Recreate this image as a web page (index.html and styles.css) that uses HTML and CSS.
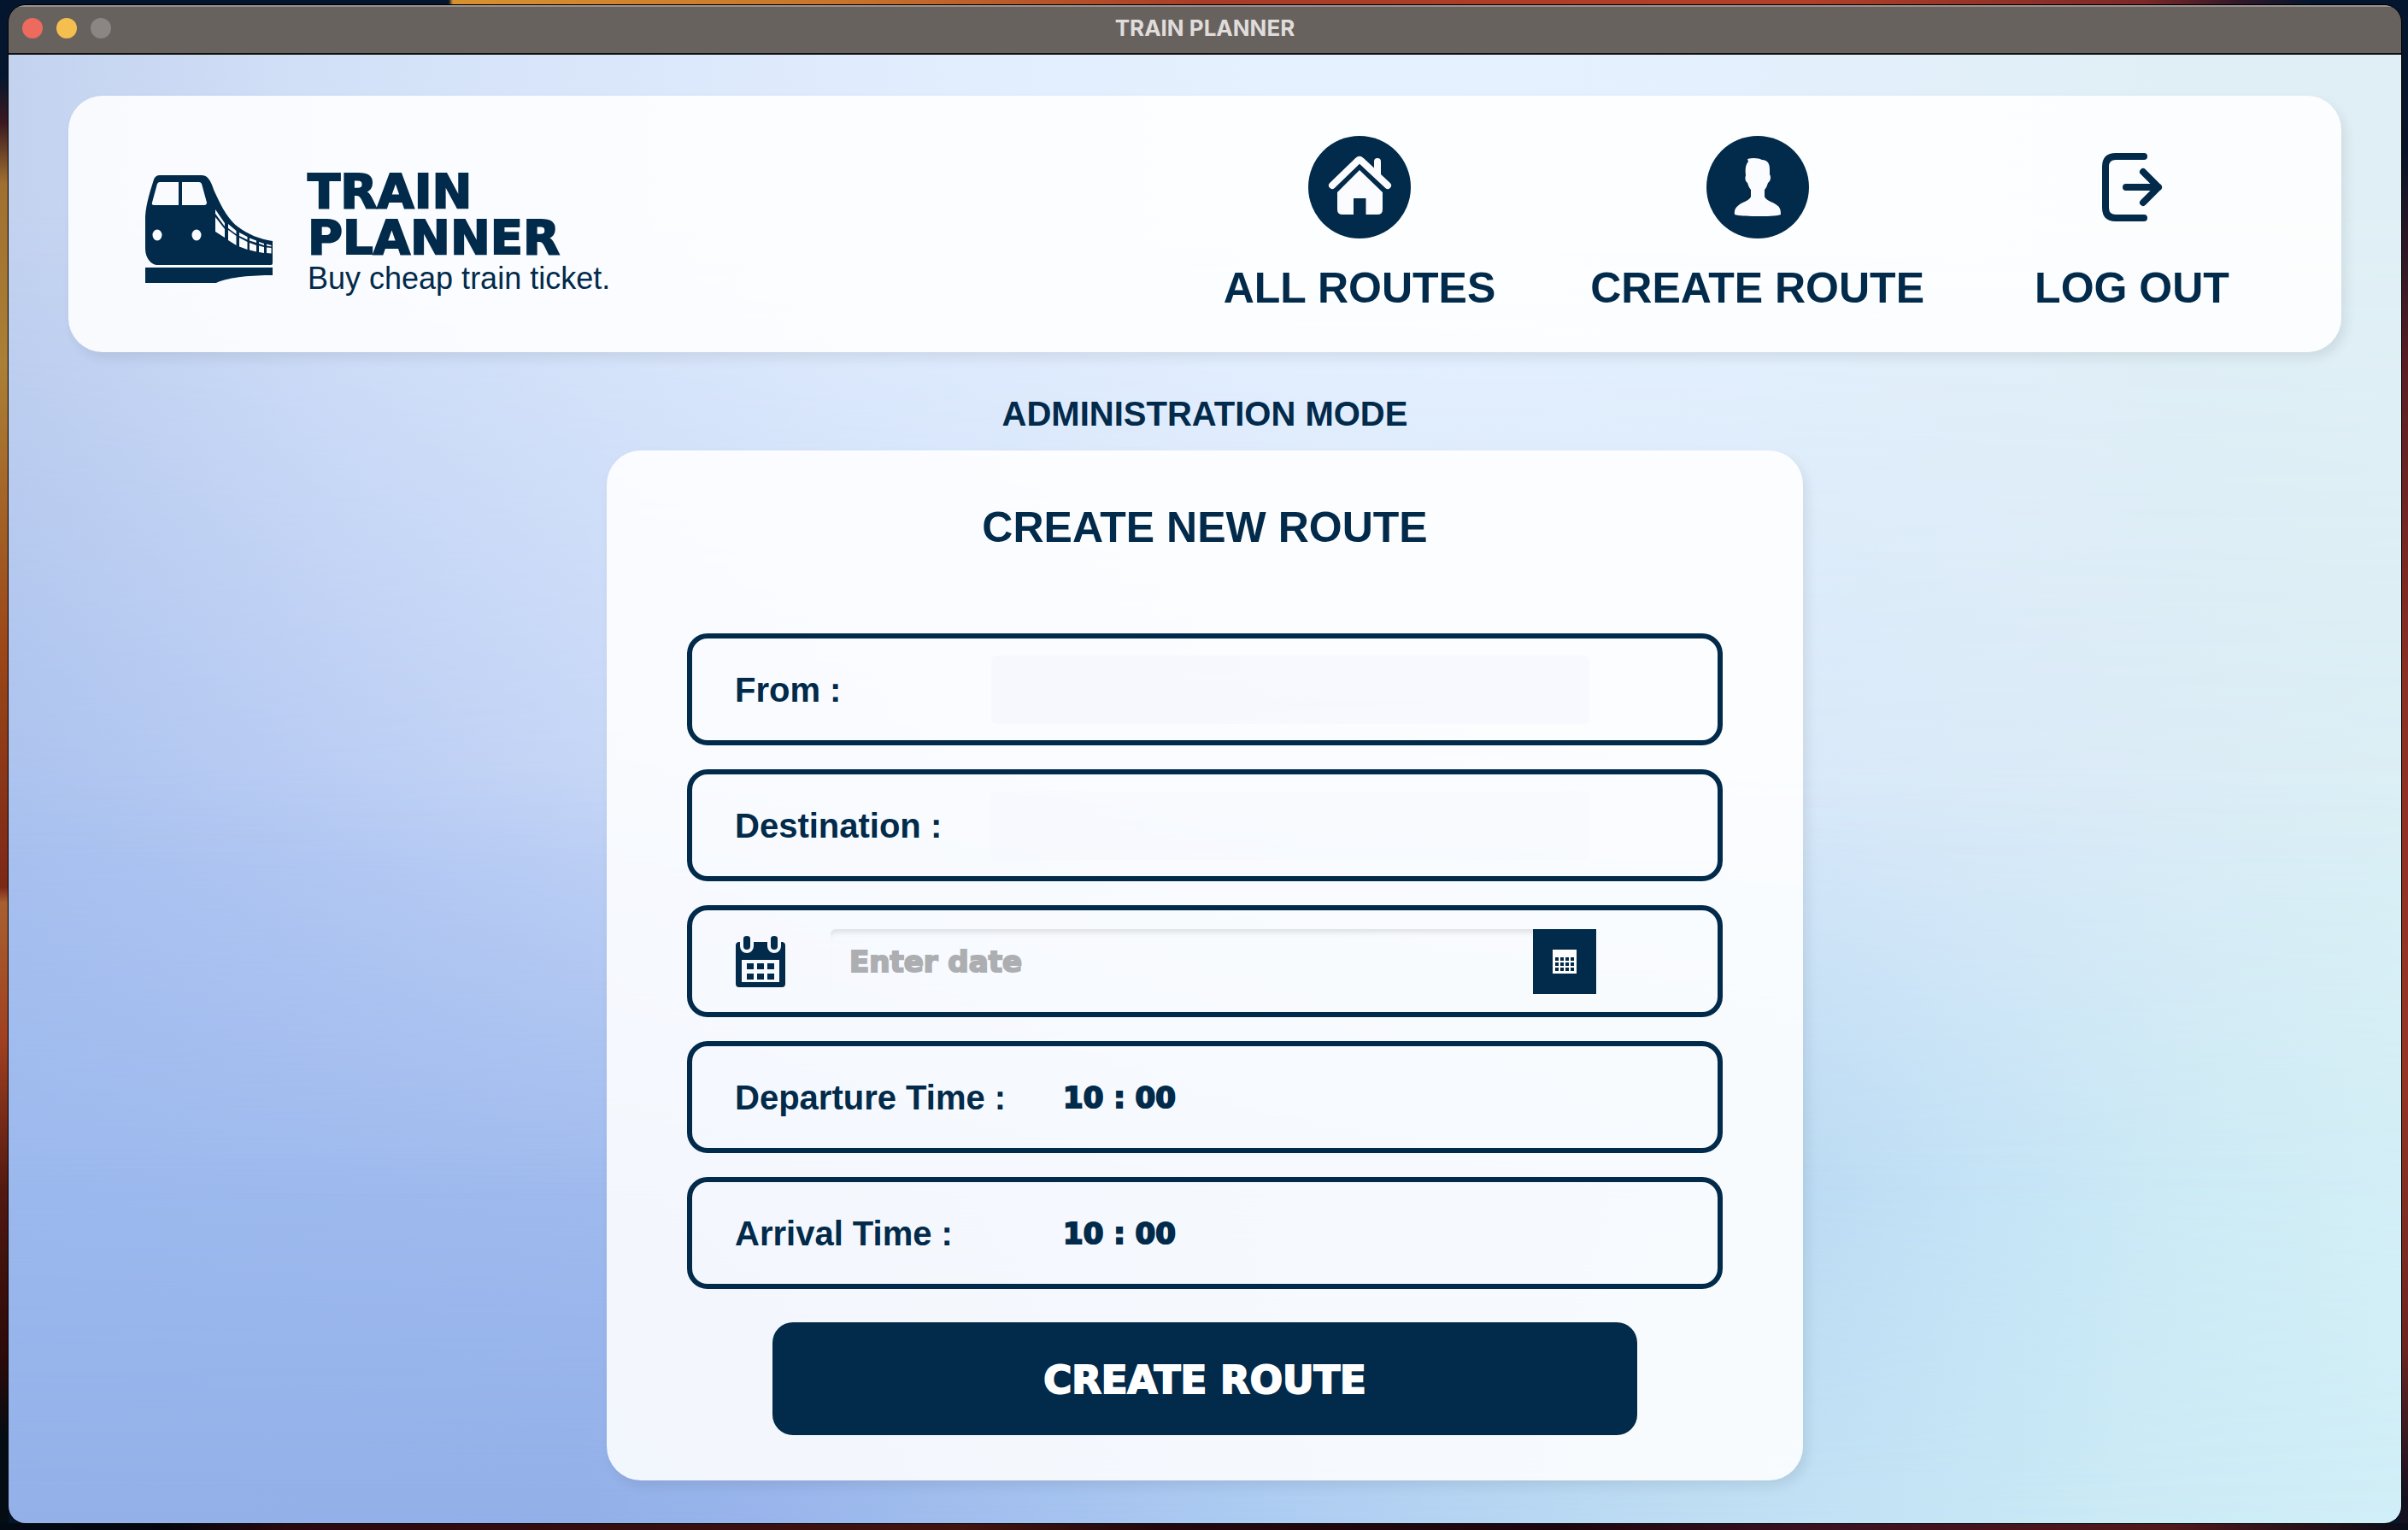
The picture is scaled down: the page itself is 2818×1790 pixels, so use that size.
FILE: index.html
```html
<!DOCTYPE html>
<html lang="en">
<head>
<meta charset="utf-8">
<title>Train Planner</title>
<meta name="viewport" content="width=device-width, initial-scale=1">
<link rel="stylesheet" href="styles.css">
</head>
<body>
<div class="window">
  <div class="titlebar">
    <div class="lights">
      <button type="button" class="light light-close" aria-label="Close"></button>
      <button type="button" class="light light-minimize" aria-label="Minimize"></button>
      <button type="button" class="light light-zoom" aria-label="Zoom" disabled></button>
    </div>
    <div class="window-title">TRAIN PLANNER</div>
  </div>

  <div class="content">
    <header class="header panel">
      <div class="brand">
        <svg class="brand-icon" viewBox="0 0 149 126" aria-hidden="true">
          <path fill="currentColor" fill-rule="evenodd" d="M17 0H66C75 0 78 11 81 19C88 34 96 51 108 60C120 69 134 75 149 77V103Q149 105 147 105H14C8 105 0 98 0 86V48C1 33 6 18 10 5Q12 0 17 0ZM17 8Q15 8 14 10L8 32Q7 35 10 35H39V8ZM43 8V35H69Q72 35 72 32L66 10Q65 8 63 8Z"/>
          <path fill="currentColor" d="M0 108H149V117C125 117 98 119 83 126H0Z"/>
          <g class="cutout">
            <ellipse cx="14" cy="70" rx="5.500" ry="6.500"/>
            <ellipse cx="60" cy="70" rx="5.500" ry="6.500"/>
            <path d="M82 40L93 56V60L82 45ZM82 49L93 63V73L82 66ZM97 57L106.500 65V69L97 62ZM97 64L106.500 71V82L97 76ZM110 67L119.500 72V75.500L110 71ZM110 73L119.500 78V87L110 83.500ZM122 73.500L130 76.500V79L122 76.500ZM122 79L130 82V89.500L122 87.500ZM133 78L139 80V82L133 80ZM133 82.500L139 84V91L133 90ZM142 80.500L147.500 82V83.500L142 82.500ZM142 84.500L147.500 85V91.500L142 91Z"/>
          </g>
        </svg>
        <div>
          <h1 class="brand-name heavy">TRAIN<br>PLANNER</h1>
          <p class="brand-tagline">Buy cheap train ticket.</p>
        </div>
      </div>

      <nav class="nav">
        <a class="nav-item" href="#routes">
          <svg class="nav-icon" viewBox="0 0 120 120" aria-hidden="true">
            <circle cx="60" cy="60" r="60" fill="currentColor"/>
            <path class="cutout-line" d="M28 58L58 29Q60 27 62 29L93 58"/>
            <path class="cutout" d="M77 30Q77 26 81 26T85 30V48L77 40ZM60 40L87 66V86Q87 92 81 92H67.500V73H53V92H40Q34 92 34 86V66Z"/>
          </svg>
          <span>ALL ROUTES</span>
        </a>
        <a class="nav-item" href="#create" aria-current="page">
          <svg class="nav-icon" viewBox="0 0 120 120" aria-hidden="true">
            <circle cx="60" cy="60" r="60" fill="currentColor"/>
            <path class="cutout" d="M48 27C54 25 62 26 65 28C72 28 74 33 74 39V45C76 48 75 53 72 55C71 58 70 61 68 63V71C70 76 77 77 81 80C86 83 87 86 87 92C81 94 70 94 60 94C50 94 39 94 33 92C32 86 35 83 39 80C43 77 50 76 52 71V63C50 61 49 58 48 55C45 53 45 49 46 46C45 39 46 33 49 30Z"/>
          </svg>
          <span>CREATE ROUTE</span>
        </a>
        <a class="nav-item" href="#logout">
          <svg class="nav-icon" viewBox="0 0 120 120" aria-hidden="true">
            <path class="line" d="M74 24H41Q29 24 29 36V84Q29 96 41 96H74M53 60H91M73 42L91 60L73 78"/>
          </svg>
          <span>LOG OUT</span>
        </a>
      </nav>
    </header>

    <p class="mode">ADMINISTRATION MODE</p>

    <main class="card panel">
      <h2 class="card-title">CREATE NEW ROUTE</h2>
      <form class="form">
        <div class="field">
          <label class="field-label" for="from">From :</label>
          <input class="place heavy" id="from" type="text">
        </div>
        <div class="field">
          <label class="field-label" for="destination">Destination :</label>
          <input class="place place-plain heavy" id="destination" type="text">
        </div>
        <div class="field">
          <label class="date-label" for="date" aria-label="Date">
            <svg class="date-icon" viewBox="0 0 58 60" aria-hidden="true">
              <path fill="currentColor" fill-rule="evenodd" d="M3 7H5V12A8 8 0 0 0 21 12V7H37V12A8 8 0 0 0 53 12V7H55Q58 8 58 11V56Q58 60 54 60H4Q0 60 0 56V11Q0 8 3 7ZM7 28V54H51V28Z"/>
              <path fill="currentColor" d="M9 3Q9 0 13 0T17 3V12Q17 16 13 16T9 12ZM41 3Q41 0 45 0T49 3V12Q49 16 45 16T41 12ZM13 32h8v7h-8zM25 32h8v7h-8zM37 32h8v7h-8zM13 44h8v7h-8zM25 44h8v7h-8zM37 44h8v7h-8z"/>
            </svg>
          </label>
          <div class="date-picker">
            <input class="date-input heavy" id="date" type="text" placeholder="Enter date">
            <button class="date-button" type="button" aria-label="Open calendar">
              <svg class="date-grid" viewBox="0 0 28 28" aria-hidden="true">
                <path fill="currentColor" fill-rule="evenodd" d="M0 0H28V28H0ZM3 9v4h4v-4zM9 9v4h4v-4zM15 9v4h4v-4zM21 9v4h4v-4zM3 15v4h4v-4zM9 15v4h4v-4zM15 15v4h4v-4zM21 15v4h4v-4zM3 21v4h4v-4zM9 21v4h4v-4zM15 21v4h4v-4zM21 21v4h4v-4z"/>
              </svg>
            </button>
          </div>
        </div>
        <div class="field">
          <label class="field-label field-label-time" for="departure">Departure Time :</label>
          <input class="time heavy" id="departure" type="text" value="10 : 00">
        </div>
        <div class="field">
          <label class="field-label field-label-time" for="arrival">Arrival Time :</label>
          <input class="time heavy" id="arrival" type="text" value="10 : 00">
        </div>
        <button class="submit heavy" type="submit">CREATE ROUTE</button>
      </form>
    </main>
  </div>
</div>
</body>
</html>
```

FILE: styles.css
```css
:root {
  --navy: #022a4a;
  --sans: "Liberation Sans", Arial, sans-serif;
}

* {
  box-sizing: border-box;
}

body {
  margin: 0;
  min-height: 100vh;
  padding: 6px 8px 8px 10px;
  display: flex;
  color: var(--navy);
  font-family: var(--sans);
  background:
    linear-gradient(90deg, #04162e 0 525px, #d8912f 530px, #c8742c 35%, #a83c28 50%, #b04028 75%, #7c2828 89%, #301828 93%, #04162e 96%) top / 100% 6px no-repeat,
    linear-gradient(90deg, #020a14 0, #04060c 7%, #2a0810 12%, #401410 40%, #22080e 48%, #1c060e 65%, #3a1020 75%, #50181c 90%, #0a0c18 100%) bottom / 100% 8px no-repeat,
    linear-gradient(#04162e 0, #04162e 5%, #3a1820 8%, #a07030 12%, #ab7f35 24%, #9c4818 42%, #7c2818 58%, #a86030 59%, #a04020 68%, #501810 78%, #2a0a08 89%, #040c14 94%) left / 10px 100% no-repeat,
    linear-gradient(#04162e 0, #081226 10%, #5a1c24 24%, #8c3024 45%, #943624 70%, #6c2420 88%, #141020 98%) right / 10px 100% no-repeat,
    #04162e;
}

/* Widest, darkest cut, for the brand, field values and the main button. */
.heavy {
  font-family: "Arial Black", "DejaVu Sans", sans-serif;
  font-weight: 900;
  -webkit-text-stroke: 2px currentColor;
}

.window {
  flex: 1;
  display: flex;
  flex-direction: column;
  border-radius: 20px;
  overflow: hidden;
  box-shadow: 0 0 0 1px #000;
}

.titlebar {
  display: grid;
  grid-template-columns: 1fr auto 1fr;
  align-items: center;
  height: 58px;
  padding: 0 16px 2px;
  background: #68625f;
  border-bottom: 2px solid #100f0f;
  box-shadow: inset 0 2px #999190;
}

.lights {
  display: flex;
  gap: 16px;
}

.light {
  width: 24px;
  height: 24px;
  padding: 0;
  border: 0;
  border-radius: 50%;
}

.light-close { background: #ed6a5e; }
.light-minimize { background: #f5bf4f; }
.light-zoom { background: #8b8583; }

.window-title {
  color: #dfdcda;
  font: 700 26px/30px Inter, sans-serif;
}

/* Backdrop: four horizontal colour rows, each fading into the one below. */
.content {
  position: relative;
  isolation: isolate;
  flex: 1;
  display: flex;
  flex-direction: column;
  align-items: center;
  padding: 48px 70px 50px;
  background: linear-gradient(90deg, #94b1e9 0, #93b0e9 24%, #99b5ec 32%, #aecdf2 53%, #bcdcf3 68%, #c3e2f5 76%, #ccebf6 89%, #d1eff8 100%);
}

.content::before,
.content::after {
  content: "";
  position: absolute;
  inset: 0;
  z-index: -2;
}

.content::before {
  background: linear-gradient(90deg, #9cb9ee 0, #a0bbee 25%, #b2cdf2 55%, #badaf3 75%, #c3e2f6 82%, #cdebf5 92%, #d3eef6 100%);
  mask-image: linear-gradient(#000 74%, transparent 100%);
}

.content::after {
  background: linear-gradient(90deg, #a9c1ef 0, #b5c9f3 12%, #c3d4f6 25%, #d4e4fa 50%, #d8e8f9 75%, #dbebf7 88%, #dbeff5 100%);
  mask-image: linear-gradient(#000 48%, transparent 78%);
}

.header {
  position: relative;
  align-self: stretch;
  display: flex;
  justify-content: space-between;
  align-items: center;
  padding: 47px 113px 47px 90px;
}

.header::before {
  content: "";
  position: absolute;
  inset: -48px -70px auto;
  height: 960px;
  z-index: -1;
  background: linear-gradient(90deg, #c3d2ef 0, #d3e1f8 14%, #e0ecfd 35%, #e6f1ff 54%, #e4f0fd 72%, #e0eff6 90%, #e0eff5 100%);
  mask-image: linear-gradient(#000 18%, transparent);
}

.panel {
  border-radius: 40px;
  background: rgba(255, 255, 255, 0.88);
  box-shadow: 5px 7px 14px rgba(0, 0, 0, 0.08);
}

.brand {
  display: flex;
  align-self: flex-start;
  gap: 41px;
  padding-top: 38px;
}

.brand-icon {
  width: 149px;
  height: 134px;
  padding-top: 8px;
}

.brand-name {
  margin: 0;
  font-size: 56px;
  line-height: 54px;
}

.brand-tagline {
  margin: 0;
  font-size: 36px;
  line-height: 42px;
}

.cutout {
  fill: #fbfcff;
}

.cutout-line {
  fill: none;
  stroke: #fbfcff;
  stroke-width: 8;
  stroke-linecap: round;
}

.line {
  fill: none;
  stroke: currentColor;
  stroke-width: 8;
  stroke-linecap: round;
  stroke-linejoin: round;
}

.nav {
  display: flex;
  gap: 111px;
}

.nav-item {
  display: flex;
  flex-direction: column;
  align-items: center;
  gap: 30px;
  min-width: 264px;
  color: inherit;
  font-size: 50px;
  font-weight: 700;
  line-height: 56px;
  text-decoration: none;
  white-space: nowrap;
}

.nav-icon {
  width: 120px;
  height: 120px;
}

.mode {
  margin: 49px 0 20px;
  font-size: 40px;
  font-weight: 700;
  line-height: 46px;
}

.card {
  width: 1400px;
  max-width: 100%;
  padding: 62px 94px 53px;
}

.card-title {
  margin: 0 0 96px;
  font-size: 50px;
  line-height: 56px;
  text-align: center;
}

.form {
  display: flex;
  flex-direction: column;
  gap: 28px;
}

.field {
  display: flex;
  align-items: center;
  height: 131px;
  padding: 0 50px;
  border: 6px solid var(--navy);
  border-radius: 24px;
}

.field-label {
  width: 300px;
  font-size: 40px;
  font-weight: 700;
  line-height: 46px;
  white-space: nowrap;
}

.field-label-time {
  width: 384px;
}

.place,
.time,
.date-input {
  min-width: 0;
  border: 0;
  color: inherit;
  background: transparent;
  font-size: 34px;
  line-height: 44px;
}

.place {
  width: 700px;
  height: 80px;
  padding: 0 20px;
  border-radius: 6px;
  background: rgba(228, 230, 245, 0.15);
}

.place-plain {
  background: rgba(228, 230, 245, 0.08);
}

.time {
  width: 200px;
  padding: 0;
}

.date-label {
  width: 112px;
}

.date-icon {
  display: block;
  width: 60px;
  height: 60px;
}

.date-picker {
  display: flex;
  width: 896px;
  height: 76px;
}

.date-input {
  flex: 1;
  padding: 0 22px;
  border-radius: 6px 0 0 6px;
  box-shadow: inset 0 8px 6px -4px rgba(0, 0, 0, 0.1);
}

.date-input::placeholder {
  color: #adaeb1;
  opacity: 1;
}

.date-button {
  display: grid;
  place-items: center;
  width: 74px;
  padding: 0;
  border: 0;
  color: #fff;
  background: var(--navy);
}

.date-grid {
  width: 28px;
  height: 28px;
}

.submit {
  align-self: center;
  width: 1012px;
  max-width: 100%;
  height: 132px;
  margin-top: 11px;
  padding: 4px 0 0;
  border: 0;
  border-radius: 24px;
  color: #fff;
  background: var(--navy);
  font-size: 45px;
  line-height: 54px;
}
```
